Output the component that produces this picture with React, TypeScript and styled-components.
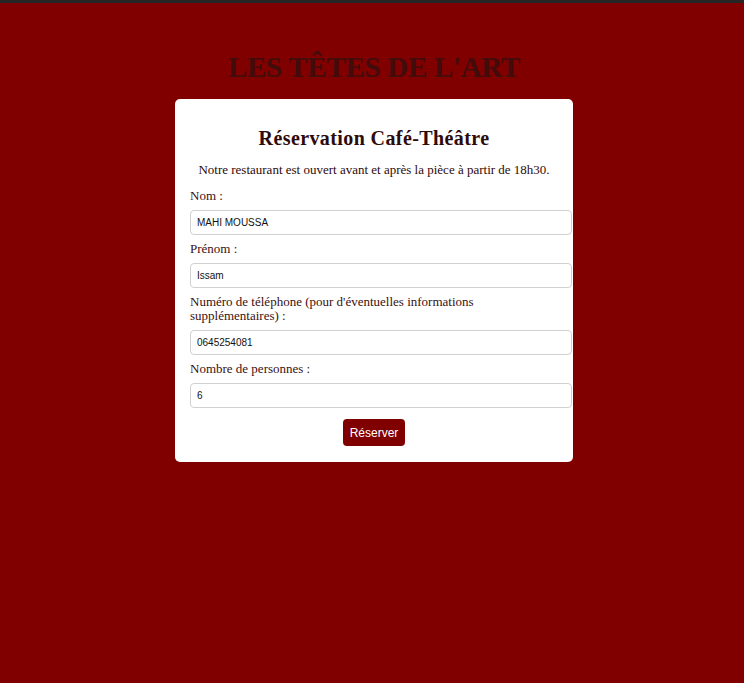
import React from "react";
import styled, { createGlobalStyle } from "styled-components";

const GlobalStyle = createGlobalStyle`
  html, body {
    margin: 0;
    padding: 0;
    background: #800000;
  }
  body {
    border-top: 3px solid #262626;
    min-height: 683px;
    box-sizing: border-box;
  }
`;

const Page = styled.div`
  display: flex;
  flex-direction: column;
  align-items: center;
  padding: 48px 0 0 4px;
`;

const SiteTitle = styled.h1`
  margin: 0 0 16px;
  font-family: "Liberation Serif", "Times New Roman", serif;
  font-weight: 700;
  font-size: 29px;
  line-height: 32px;
  letter-spacing: -0.3px;
  color: #420c0c;
`;

const Card = styled.form`
  width: 398px;
  box-sizing: border-box;
  background: #ffffff;
  border-radius: 5px;
  padding: 27px 15px 16px;
  font-family: "Liberation Serif", "Times New Roman", serif;
  color: #3a1010;
`;

const CardTitle = styled.h2`
  margin: 0 0 12px;
  text-align: center;
  font-size: 20px;
  line-height: 24px;
  font-weight: 700;
  letter-spacing: 0.4px;
  color: #2e0a0a;
`;

const Intro = styled.p`
  margin: 0 0 11px;
  text-align: center;
  font-size: 13px;
  line-height: 16px;
  color: #2e0a0a;
`;

const Field = styled.div`
  display: flex;
  flex-direction: column;
  gap: 7px;
  margin-bottom: 7px;
`;

const Label = styled.label`
  display: block;
  font-size: 13px;
  line-height: 14px;
  color: #3a1010;
  padding-right: 60px;
`;

const Input = styled.input`
  display: block;
  width: 100%;
  height: 23px;
  padding: 0 6px;
  border: 1px solid #d0d0d0;
  border-radius: 4px;
  font-family: "Liberation Sans", Arial, sans-serif;
  font-size: 10px;
  color: #111;
  background: #fff;
  outline: none;
`;

const Actions = styled.div`
  display: flex;
  justify-content: center;
  padding-top: 4px;
`;

const Button = styled.button`
  height: 27px;
  padding: 0 7px;
  border: none;
  border-radius: 4px;
  background: #800000;
  color: #ffffff;
  font-family: "Liberation Sans", Arial, sans-serif;
  font-size: 12px;
  cursor: pointer;
`;

const fields = [
  { id: "nom", label: "Nom :", value: "MAHI MOUSSA" },
  { id: "prenom", label: "Prénom :", value: "Issam" },
  {
    id: "tel",
    label: "Numéro de téléphone (pour d'éventuelles informations supplémentaires) :",
    value: "0645254081",
  },
  { id: "nb", label: "Nombre de personnes :", value: "6" },
];

export default function App() {
  return (
    <>
      <GlobalStyle />
      <Page>
        <SiteTitle>LES TÊTES DE L'ART</SiteTitle>
        <Card onSubmit={(e) => e.preventDefault()}>
          <CardTitle>Réservation Café-Théâtre</CardTitle>
          <Intro>Notre restaurant est ouvert avant et après la pièce à partir de 18h30.</Intro>
          {fields.map((f) => (
            <Field key={f.id}>
              <Label htmlFor={f.id}>{f.label}</Label>
              <Input id={f.id} defaultValue={f.value} />
            </Field>
          ))}
          <Actions>
            <Button type="submit">Réserver</Button>
          </Actions>
        </Card>
      </Page>
    </>
  );
}
